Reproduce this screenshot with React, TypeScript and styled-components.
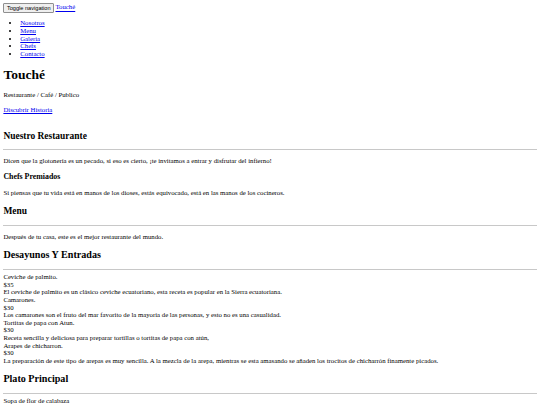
import styled, { createGlobalStyle } from 'styled-components';

// the page is a plain, unstyled document shown at 1280px wide and shrunk to 540px,
// so every browser default is scaled by 540 / 1280
const Global = createGlobalStyle`
	html {
		font-size: 6.75px;
	}
	body {
		margin: 0.5em;
		background: #fff;
		color: #000;
		font-family: 'Liberation Serif', 'Times New Roman', serif;
		font-size: 1rem;
		line-height: 1.13;
	}
`;

const Nav = styled.nav`
	display: block;
`;

const Toggle = styled.button`
	font-family: 'Liberation Sans', Arial, sans-serif;
	font-size: 0.833em;
	line-height: 1.15;
	padding: 0.08em 0.45em;
	border: 1px solid #8f8f8f;
	border-radius: 1px;
	background: #efefef;
	color: #000;
	margin-right: 0.25em;
	vertical-align: baseline;
`;

const Link = styled.a`
	color: #0000ee;
	text-decoration: underline;
`;

const NavList = styled.ul`
	margin: 1em 0;
	padding-left: 2.5em;
	list-style: disc;
`;

// the bottom padding keeps the last paragraph's margin inside the header
const Hero = styled.header`
	padding-bottom: 0.1em;
`;

const Section = styled.section`
	display: block;
`;

const Title = styled.h1`
	font-size: 2em;
	line-height: 1.15;
	margin: 0.67em 0;
	font-weight: bold;
`;

const Para = styled.p`
	margin: 1em 0;
`;

const SectionTitle = styled.h2`
	font-size: 1.4em;
	line-height: 1.15;
	margin: 1.05em 0 0.83em;
	font-weight: bold;
`;

const SubTitle = styled.h3`
	font-size: 1.17em;
	line-height: 1.15;
	margin: 0.9em 0 1em;
	font-weight: bold;
`;

const CourseTitle = styled.h2`
	font-size: 1.5em;
	line-height: 1.15;
	margin: 0.83em 0;
	font-weight: bold;
`;

const Rule = styled.hr`
	margin: 0.5em 0;
	border: none;
	border-top: 1px solid #c8c8c8;
	height: 0;
`;

const Dish = styled.div``;

const Line = styled.div``;

interface IDish {
	name: string;
	price: string;
	text: string;
}

const breakfast: IDish[] = [
	{
		name: 'Ceviche de palmito.',
		price: '$35',
		text: 'El ceviche de palmito es un clásico ceviche ecuatoriano, esta receta es popular en la Sierra ecuatoriana.',
	},
	{
		name: 'Camarones.',
		price: '$30',
		text: 'Los camarones son el fruto del mar favorito de la mayoría de las personas, y esto no es una casualidad.',
	},
	{
		name: 'Tortitas de papa con Atun.',
		price: '$30',
		text: 'Receta sencilla y deliciosa para preparar tortillas o tortitas de papa con atún,',
	},
	{
		name: 'Arapes de chicharron.',
		price: '$30',
		text: 'La preparación de este tipo de arepas es muy sencilla. A la mezcla de la arepa, mientras se esta amasando se añaden los trocitos de chicharrón finamente picados.',
	},
];

const mains: IDish[] = [
	{
		name: 'Sopa de flor de calabaza',
		price: '$40',
		text: 'Una sopa cremosa y suave, preparada con flor de calabaza fresca.',
	},
];

const DishList = ({ items }: { items: IDish[] }) => (
	<>
		{items.map((d, i) => (
			<Dish key={i}>
				<Line>{d.name}</Line>
				<Line>{d.price}</Line>
				<Line>{d.text}</Line>
			</Dish>
		))}
	</>
);

const links = ['Nosotros', 'Menu', 'Galeria', 'Chefs', 'Contacto'];

const App = () => {
	return (
		<>
			<Global />
			<Nav>
				<Toggle type='button'>Toggle navigation</Toggle>
				<Link href='#'>Touché</Link>
				<NavList>
					{links.map((l) => (
						<li key={l}>
							<Link href='#'>{l}</Link>
						</li>
					))}
				</NavList>
			</Nav>
			<Hero>
				<Title>Touché</Title>
				<Para>Restaurante / Café / Publico</Para>
				<Para>
					<Link href='#'>Discubrir Historia</Link>
				</Para>
			</Hero>
			<Section>
				<SectionTitle>Nuestro Restaurante</SectionTitle>
				<Rule />
				<Para>
					Dicen que la glotonería es un pecado, si eso es cierto, ¡te invitamos a entrar y disfrutar del infierno!
				</Para>
				<SubTitle>Chefs Premiados</SubTitle>
				<Para>
					Si piensas que tu vida está en manos de los dioses, estás equivocado, está en las manos de los cocineros.
				</Para>
			</Section>
			<Section>
				<SectionTitle>Menu</SectionTitle>
				<Rule />
				<Para>Después de tu casa, este es el mejor restaurante del mundo.</Para>
				<CourseTitle>Desayunos Y Entradas</CourseTitle>
				<Rule />
				<DishList items={breakfast} />
				<CourseTitle>Plato Principal</CourseTitle>
				<Rule />
				<DishList items={mains} />
			</Section>
		</>
	);
};

export default App;
